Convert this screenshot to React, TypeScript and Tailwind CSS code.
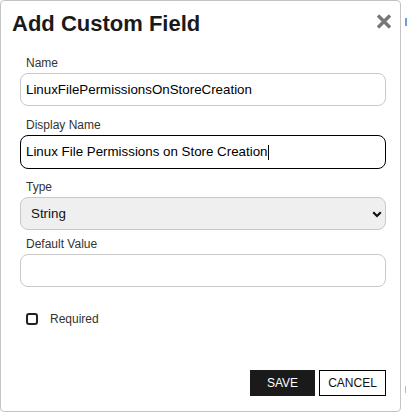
import {ReactNode} from "react";

function FieldLabel({children, className}: {children: ReactNode; className?: string}) {
    return (
        <label className={"block text-[12px] leading-[14px] text-[#333] mb-[3px] pl-[6px] " + (className ?? "")}>
            {children}
        </label>
    );
}

function CloseIcon() {
    return (
        <svg width="16" height="15" viewBox="0 0 16 15" className="block">
            <path d="M2 1.5 L14 13.5 M14 1.5 L2 13.5" stroke="#777" strokeWidth="3.4" strokeLinecap="butt"/>
        </svg>
    );
}

export default function App() {
    return (
        <div className="relative w-[407px] h-[413px] bg-white font-['Liberation_Sans',Arial,sans-serif] text-[#111]">
            {/* bits of the page behind the dialog */}
            <span className="absolute left-[405px] top-[18px] w-[2px] h-[8px] bg-[#6f9fd0]"/>
            <span className="absolute left-[405px] top-[386px] w-[1px] h-[7px] bg-[#bbb]"/>

            <div className="w-[401px] h-[412px] border border-[#c4c4c4] rounded-[4px] bg-white">
                <div className="flex items-start justify-between pl-[11px] pr-[8px] pt-[10px]">
                    <h1 className="text-[22px] leading-[25px] font-bold text-[#1a1a1a]">Add Custom Field</h1>
                    <button type="button" className="mt-[3px]">
                        <CloseIcon/>
                    </button>
                </div>

                <div className="pl-[19px] pt-[20px]">
                    <FieldLabel>Name</FieldLabel>
                    <input
                        defaultValue="LinuxFilePermissionsOnStoreCreation"
                        className="block w-[366px] h-[33px] border border-[#c8c8c8] rounded-[8px] pl-[5px] text-[13.33px] text-black outline-none"
                    />

                    <FieldLabel className="mt-[12px]">Display Name</FieldLabel>
                    <div className="flex items-center w-[366px] h-[34px] border border-black rounded-[8px] pl-[5px] text-[13.33px] text-black">
                        <span>Linux File Permissions on Store Creation</span>
                        <span className="w-[1px] h-[15px] bg-black"/>
                    </div>

                    <FieldLabel className="mt-[11px]">Type</FieldLabel>
                    <div className="relative w-[366px]">
                        <select
                            defaultValue="String"
                            className="block w-full h-[33px] appearance-none border border-[#c8c8c8] rounded-[8px] bg-[#efefef] pl-[10px] text-[13.33px] text-[#111] outline-none"
                        >
                            <option>String</option>
                            <option>Integer</option>
                            <option>Boolean</option>
                        </select>
                        <svg width="10" height="7" viewBox="0 0 10 7" className="absolute right-[4px] top-[14px] pointer-events-none">
                            <path d="M1.2 1.2 L5 5 L8.8 1.2" fill="none" stroke="#111" strokeWidth="2.2"/>
                        </svg>
                    </div>

                    <FieldLabel className="mt-[7px]">Default Value</FieldLabel>
                    <input
                        className="block w-[366px] h-[33px] border border-[#c8c8c8] rounded-[8px] pl-[5px] text-[13.33px] outline-none"
                    />

                    <div className="flex items-center gap-[12px] mt-[26px] pl-[6px] h-[12px]">
                        <span className="w-[12px] h-[12px] border-2 border-[#222] rounded-[3px]"/>
                        <span className="text-[12px] text-[#333]">Required</span>
                    </div>

                    <div className="flex justify-end gap-[4px] w-[366px] mt-[45px]">
                        <button
                            type="button"
                            className="w-[65px] h-[26px] bg-[#1a1a1a] text-white text-[12px]"
                        >
                            SAVE
                        </button>
                        <button
                            type="button"
                            className="w-[67px] h-[26px] border border-black bg-white text-[#111] text-[12px]"
                        >
                            CANCEL
                        </button>
                    </div>
                </div>
            </div>
        </div>
    );
}
